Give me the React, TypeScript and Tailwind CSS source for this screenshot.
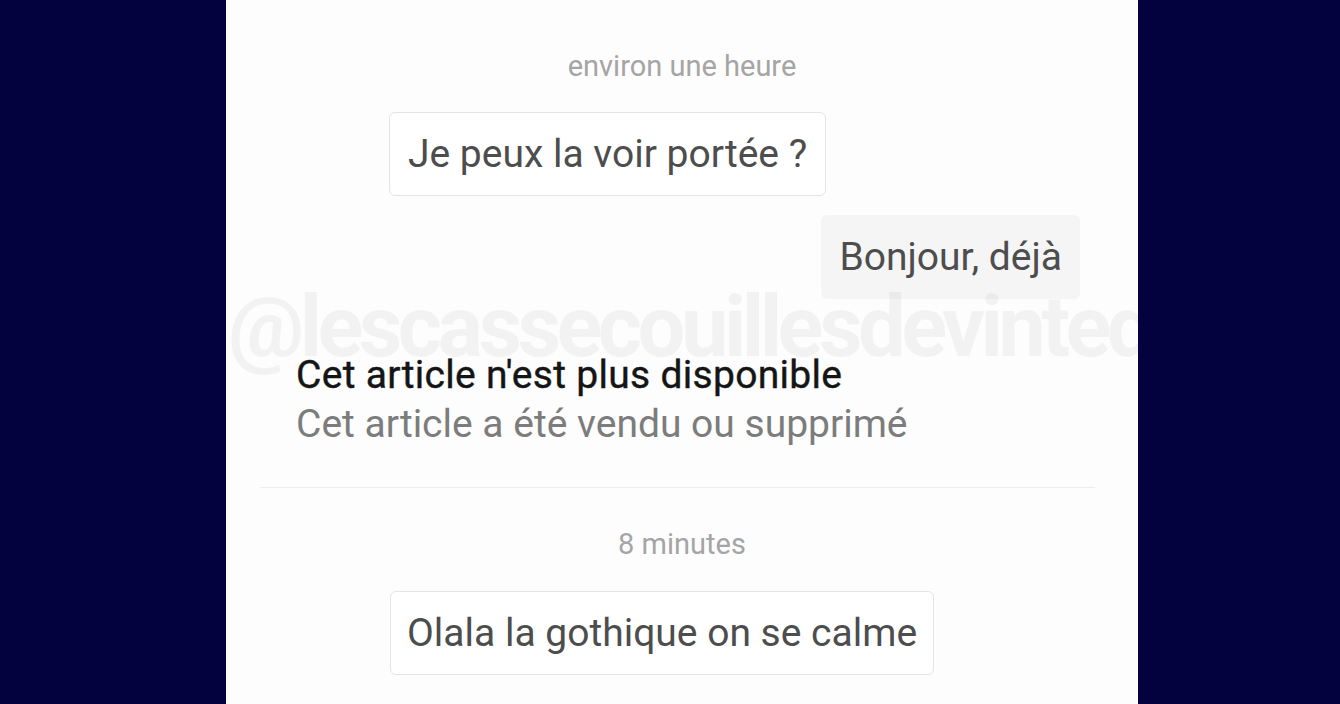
const font = { fontFamily: "Roboto, 'Liberation Sans', sans-serif" };

function Stamp({ children, className }: { children: string; className?: string }) {
  return <div className={`text-center text-[29px] leading-[36px] text-[#a5a5a5] ${className ?? ""}`}>{children}</div>;
}

export default function App() {
  return (
    <div className="flex h-[704px] w-full bg-[#03023f]" style={font}>
      <div className="relative ml-[226px] flex h-full w-[912px] flex-col overflow-hidden bg-[#fdfdfd]">
        <Stamp className="mt-[48px]">environ une heure</Stamp>

        <div className="mt-[28px] flex pl-[163px]">
          <div className="rounded-md border border-[#e4e4e4] bg-white px-[18px] py-[18px] text-[39px] leading-[46px] text-[#4d4d4d]">
            Je peux la voir portée ?
          </div>
        </div>

        <div className="mt-[19px] flex justify-end pr-[58px]">
          <div className="rounded-md bg-[#f5f5f6] px-[18px] py-[19px] text-[39px] leading-[46px] text-[#4d4d4d]">
            Bonjour, déjà
          </div>
        </div>

        <div className="mt-[52px] pl-[70px] text-[39px] leading-[49px]">
          <div className="tracking-[0.3px] text-[#151515] [-webkit-text-stroke:0.4px_#151515]">Cet article n'est plus disponible</div>
          <div className="text-[#7c7c7c]">Cet article a été vendu ou supprimé</div>
        </div>

        <div className="ml-[34px] mr-[43px] mt-[38px] h-px bg-[#eeeeee]" />

        <Stamp className="mt-[38px]">8 minutes</Stamp>

        <div className="mt-[29px] flex pl-[164px]">
          <div className="rounded-md border border-[#e4e4e4] bg-white px-[16px] py-[18px] text-[39px] leading-[46px] text-[#4d4d4d]">
            Olala la gothique on se calme
          </div>
        </div>

        {/* watermark */}
        <div className="pointer-events-none absolute left-[2px] top-[264px] whitespace-nowrap text-[85px] font-bold tracking-[-4.6px] text-black/[0.045]">
          @lescassecouillesdevinted
        </div>
      </div>
    </div>
  );
}
